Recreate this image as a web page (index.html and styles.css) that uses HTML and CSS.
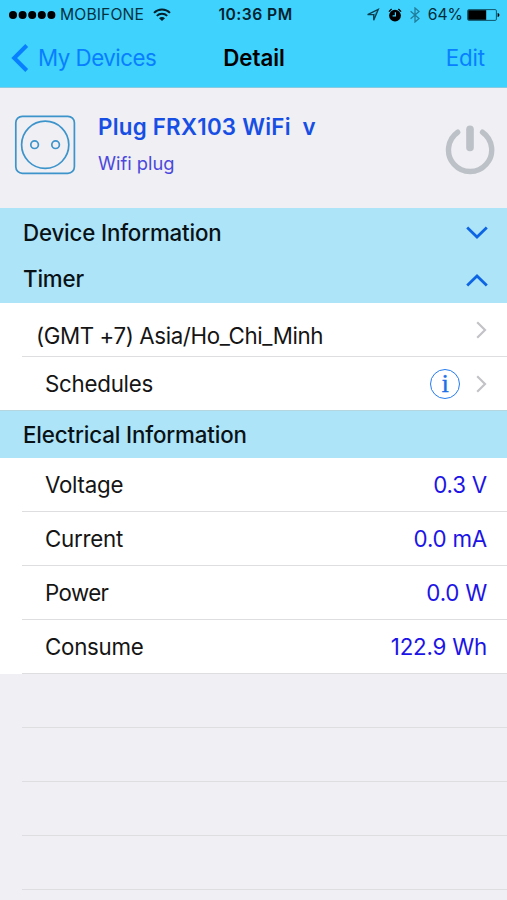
FILE: index.html
```html
<!DOCTYPE html>
<html lang="en">
<head>
<meta charset="utf-8">
<title>Detail</title>
<link rel="stylesheet" href="styles.css">
</head>
<body>
<header class="top">
  <div class="status">
    <div class="status-left">
      <svg class="dots" width="47" height="10" viewBox="0 0 47 10"><circle cx="4" cy="5" r="4"/><circle cx="13.6" cy="5" r="4"/><circle cx="23.2" cy="5" r="4"/><circle cx="32.8" cy="5" r="4"/><circle cx="42.4" cy="5" r="4"/></svg>
      <span class="carrier">MOBIFONE</span>
      <svg class="wifi" width="18" height="14" viewBox="0 0 18 14" fill="none" stroke="#04202b" stroke-width="2"><path d="M1 4.9a11.4 11.4 0 0 1 16 0M3.8 7.9a7.5 7.5 0 0 1 10.4 0"/><path d="M9 13L6 10.2a4.2 4.2 0 0 1 6 0z" fill="#04202b" stroke="none"/></svg>
    </div>
    <span class="time">10:36 PM</span>
    <div class="status-right">
      <svg class="loc" width="14" height="14" viewBox="0 0 14 14" fill="none" stroke="#0b3f50" stroke-width="1.3"><path d="M1.6 6.6L12.3 1.4L7.7 12.2V6.6z"/><path d="M7.7 6.6L12.3 1.4L7.7 12.2z" fill="#0b3f50" fill-opacity=".35" stroke="none"/></svg>
      <svg class="alarm" width="14" height="14" viewBox="0 0 14 14"><circle cx="7" cy="7.6" r="5.9"/><path d="M.9 3.6L3.6 1M13.1 3.6L10.4 1" stroke="#000" stroke-width="1.3"/><path d="M7.4 4.3v3.6H4.6" fill="none" stroke="#3fd0fb" stroke-width="1.2"/></svg>
      <svg class="bt" width="10" height="16" viewBox="0 0 10 16" fill="none" stroke="#217e9b" stroke-width="1.3"><path d="M.6 4.3L9 11.5L5 15V1L9 4.5L.6 11.7"/></svg>
      <span class="percent">64%</span>
      <svg class="battery" width="33" height="12" viewBox="0 0 33 12"><rect x=".6" y=".6" width="28.8" height="10.8" rx="1.2" fill="none" stroke="#10566b"/><path d="M1.2 1.2h18v9.6h-18z"/><path d="M30.6 4c2.4.2 2.4 3.8 0 4z"/></svg>
    </div>
  </div>
  <nav class="nav">
    <a class="back"><svg width="18" height="28" viewBox="0 0 18 28" fill="none" stroke="#087fff" stroke-width="4"><path d="M15.7 1.5L3.2 14L15.7 26.5"/></svg><span class="back-label">My Devices</span></a>
    <h1 class="title">Detail</h1>
    <a class="edit">Edit</a>
  </nav>
</header>
<section class="device">
  <svg class="socket" width="62" height="60" viewBox="0 0 62 60" fill="none" stroke="#3d94cb" stroke-width="1.7"><rect x="1.8" y="1.3" width="58.6" height="57" rx="6.5"/><circle cx="31.2" cy="29.8" r="23.6"/><circle cx="20.6" cy="29.7" r="3.8"/><circle cx="41.6" cy="29.7" r="3.8"/></svg>
  <div class="device-text">
    <h2 class="name">Plug FRX103 WiFi&nbsp; v</h2>
    <p class="kind">Wifi plug</p>
  </div>
  <svg class="power" width="50" height="50" viewBox="0 0 50 50" fill="none" stroke="#bcc1c7" stroke-linecap="round"><path stroke-width="5.4" d="M12.7 7.2A21.6 21.6 0 1 0 37.5 7.2"/><path stroke-width="7.6" d="M25 4.3v18.2"/></svg>
</section>
<div class="section"><span class="w-info">Device Information</span><svg class="fold" width="22" height="14" viewBox="0 0 22 14"><path d="M1.2 1.5L11 11L20.8 1.5"/></svg></div>
<div class="section timer"><span class="w-timer">Timer</span><svg class="fold" width="22" height="14" viewBox="0 0 22 14"><path d="M1.2 12.5L11 3L20.8 12.5"/></svg></div>
<div class="row zone"><span class="w-zone">(GMT +7) Asia/Ho_Chi_Minh</span><svg class="go" width="11" height="18" viewBox="0 0 11 18"><path d="M1.2 1.3L9 9L1.2 16.7"/></svg></div>
<div class="row schedules"><span class="w-sched">Schedules</span><span class="info">i</span><svg class="go" width="11" height="18" viewBox="0 0 11 18"><path d="M1.2 1.3L9 9L1.2 16.7"/></svg></div>
<div class="section electrical"><span class="w-elec">Electrical Information</span></div>
<div class="row reading"><span>Voltage</span><b>0.3 V</b></div>
<div class="row reading"><span>Current</span><b>0.0 mA</b></div>
<div class="row reading"><span class="w-power">Power</span><b>0.0 W</b></div>
<div class="row reading"><span>Consume</span><b>122.9 Wh</b></div>
<div class="row blank"></div>
<div class="row blank"></div>
<div class="row blank"></div>
<div class="row blank"></div>
</body>
</html>
```
FILE: styles.css
```css
* { box-sizing: border-box; }
body { margin: 0; height: 900px; overflow: hidden; background: #efeff4; color: #151515; font-family: Inter, "Liberation Sans", sans-serif; font-size: 22.3px; line-height: 28px; }
svg { display: block; flex: none; }
h1, h2, p { margin: 0; }
span, b, a, h1, h2, p { white-space: nowrap; }
.top { height: 88px; background: #3fd2fd; border-bottom: 1px solid #86cbe2; }
.status { display: grid; grid-template-columns: 1fr auto 1fr; height: 29px; padding: 0 7px 0 9px; align-items: center; font-size: 15.7px; line-height: 20px; }
.status-left, .status-right { display: flex; align-items: center; }
.status-right { justify-content: flex-end; }
.carrier { margin-left: 4px; padding-top: 1px; letter-spacing: .12px; color: #06313f; }
.wifi { margin-left: 9px; }
.time { padding: 1px 0 0 2px; font-weight: 600; letter-spacing: .45px; color: #03222e; }
.alarm { margin-left: 8px; }
.bt { margin-left: 8px; }
.percent { margin-left: 8px; padding-top: 1px; color: #032b39; }
.battery { margin-left: 4px; }
.nav { display: grid; grid-template-columns: 1fr auto 1fr; height: 58px; align-items: center; padding: 0 11px; color: #087fff; }
.back { display: flex; align-items: center; gap: 9px; letter-spacing: -.5px; }
.title { padding-left: 1px; font-size: 22.3px; line-height: 28px; font-weight: 600; color: #000; }
.edit { padding-right: 11px; text-align: right; letter-spacing: -.1px; }
.device { display: flex; height: 120px; padding: 0 12px 0 14px; }
.socket { margin-top: 27px; }
.device-text { flex: 1; padding: 25px 0 0 22px; }
.name { font-size: 22.3px; line-height: 28px; font-weight: 600; letter-spacing: .26px; color: #174ee4; }
.kind { margin-top: 10px; font-size: 18.3px; line-height: 24px; color: #4b48dc; }
.power { margin-top: 37px; }
.section { display: flex; justify-content: space-between; align-items: center; height: 47px; padding: 2px 19px 0 23px; background: #aee4f8; color: #081216; font-weight: 500; letter-spacing: -.16px; }
.timer { height: 48px; padding-top: 0; }
.fold { margin-top: 1px; fill: none; stroke: #0d65e4; stroke-width: 2.8; }
.timer .fold { margin-top: 2px; }
.row { display: flex; align-items: center; height: 54px; padding: 0 20px 0 45px; letter-spacing: -.25px; background: linear-gradient(#dedee1, #dedee1) 22px 100% / 100% 1.5px no-repeat, #fff; }
.go { fill: none; stroke: #c3c3c7; stroke-width: 2.2; }
.zone { padding-left: 36px; justify-content: space-between; }
.zone span { padding-top: 11px; letter-spacing: -.39px; }
.schedules { height: 53px; background: #fff; }
.info { display: grid; place-items: center; width: 30px; height: 30px; margin: 0 16px 0 auto; border: 1.5px solid #247cf0; border-radius: 50%; color: #1c70e8; font: 25px/26px "Liberation Serif", serif; -webkit-text-stroke: .5px #1c70e8; }
.electrical { height: 48px; padding-top: 0; border-top: 1px solid #b5d5df; letter-spacing: -.13px; }
.reading { justify-content: space-between; }
.w-power { letter-spacing: -.6px; }
.reading b { font-weight: 400; letter-spacing: -.2px; color: #1c14e6; }
.blank { background-color: transparent; }
```
